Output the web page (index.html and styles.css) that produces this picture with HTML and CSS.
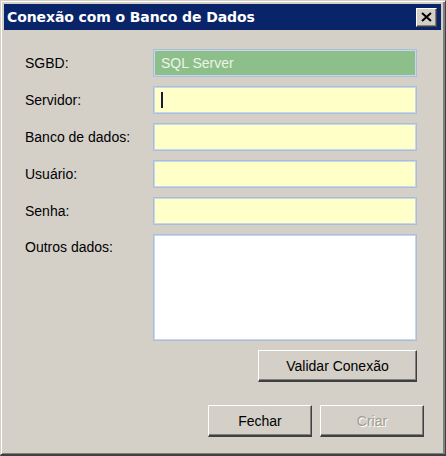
FILE: index.html
```html
<!DOCTYPE html>
<html lang="pt">
<head>
<meta charset="utf-8">
<title>Conexão com o Banco de Dados</title>
<link rel="stylesheet" href="styles.css">
</head>
<body>
<div class="window">
  <div class="titlebar">
    <span class="title">Conexão com o Banco de Dados</span>
    <span class="close"><svg width="11" height="10" viewBox="0 0 11 10"><path d="M1 1 L10 9 M10 1 L1 9" stroke="#000" stroke-width="2"/></svg></span>
  </div>
  <div class="content">
    <div class="form">
      <label class="lbl">SGBD:</label>
      <div class="field green">SQL Server</div>
      <label class="lbl">Servidor:</label>
      <div class="field yellow"><span class="caret"></span></div>
      <label class="lbl">Banco de dados:</label>
      <div class="field yellow"></div>
      <label class="lbl">Usuário:</label>
      <div class="field yellow"></div>
      <label class="lbl">Senha:</label>
      <div class="field yellow"></div>
      <label class="lbl top">Outros dados:</label>
      <div class="field white"></div>
    </div>
    <div class="validate-row">
      <button class="btn wide">Validar Conexão</button>
    </div>
    <div class="actions">
      <button class="btn">Fechar</button>
      <button class="btn disabled">Criar</button>
    </div>
  </div>
</div>
</body>
</html>
```
FILE: styles.css
```css
html, body {
  margin: 0;
  padding: 0;
  background: #d4d0c8;
}
.window {
  width: 446px;
  height: 456px;
  box-sizing: border-box;
  background: #d4d0c8;
  border-top: 1px solid #d4d0c8;
  border-left: 1px solid #d4d0c8;
  border-right: 1px solid #404040;
  border-bottom: 2px solid #404040;
  box-shadow: inset 1px 1px #ffffff, inset -2px -1px #808080;
  padding: 3px 4px 3px 3px;
  display: flex;
  flex-direction: column;
  font-family: "Liberation Sans", Arial, sans-serif;
}
.titlebar {
  height: 26px;
  background: #0a246a;
  display: flex;
  align-items: center;
  justify-content: space-between;
  padding: 0 4px 0 3px;
}
.title {
  color: #ffffff;
  font-family: "DejaVu Sans", Verdana, sans-serif;
  font-weight: bold;
  font-size: 14px;
  letter-spacing: -0.1px;
}
.close {
  width: 21px;
  height: 19px;
  box-sizing: border-box;
  background: #d4d0c8;
  border-top: 1px solid #ffffff;
  border-left: 1px solid #ffffff;
  border-right: 1px solid #404040;
  border-bottom: 1px solid #404040;
  box-shadow: inset -1px -1px #808080;
  display: flex;
  align-items: center;
  justify-content: center;
}
.content {
  padding: 19px 0 0 21px;
  display: flex;
  flex-direction: column;
}
.form {
  display: grid;
  grid-template-columns: 128px 264px;
  grid-template-rows: repeat(5, 28px) 107px;
  row-gap: 9px;
}
.lbl {
  font-size: 14px;
  color: #000;
  display: flex;
  align-items: center;
}
.lbl.top {
  align-items: flex-start;
  padding-top: 5px;
}
.field {
  box-sizing: border-box;
  border: 1px solid #a9bfd9;
  box-shadow: inset 1px 1px #c8d7ea, inset -1px -1px #c8d7ea;
  display: flex;
  align-items: center;
  padding-left: 7px;
  font-size: 14px;
}
.green {
  background: #8cbf8a;
  color: #eef3e8;
}
.yellow {
  background: #ffffc8;
}
.white {
  background: #ffffff;
}
.caret {
  width: 2px;
  height: 16px;
  background: #1a1a3a;
}
.validate-row {
  display: flex;
  padding-left: 233px;
  margin-top: 9px;
}
.btn {
  flex: none;
  width: 104px;
  height: 32px;
  box-sizing: border-box;
  background: #d4d0c8;
  border-top: 1px solid #ffffff;
  border-left: 1px solid #ffffff;
  border-right: 1px solid #404040;
  border-bottom: 2px solid #404040;
  box-shadow: inset -1px -1px #808080;
  font-family: "Liberation Sans", Arial, sans-serif;
  font-size: 14px;
  color: #000;
  padding: 0;
}
.btn.wide {
  width: 159px;
}
.btn.disabled {
  color: #a09c94;
  text-shadow: 1px 1px #ffffff;
}
.actions {
  display: flex;
  gap: 8px;
  padding-left: 183px;
  margin-top: 23px;
}
```
